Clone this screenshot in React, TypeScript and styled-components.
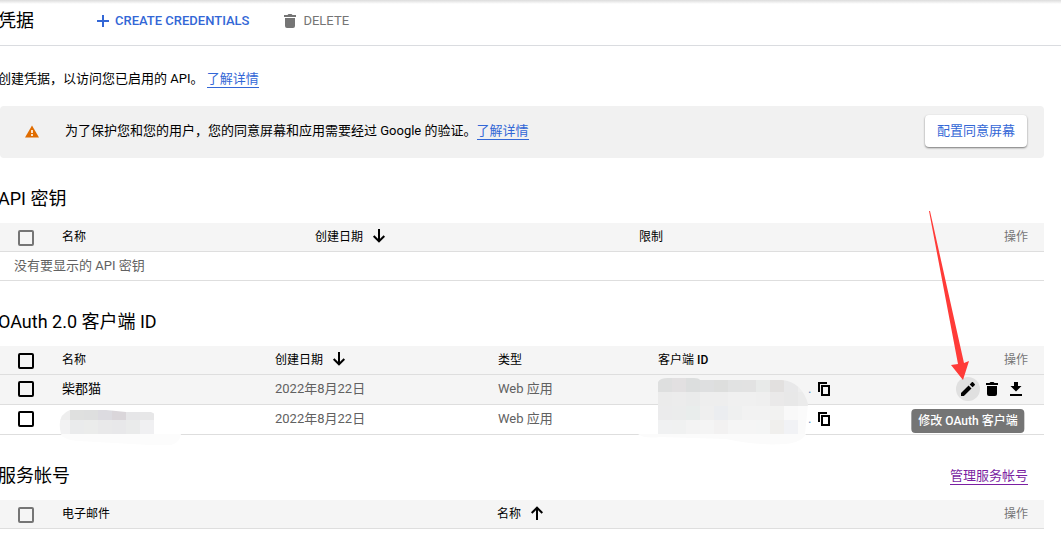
import React from "react";
import styled, { createGlobalStyle, css } from "styled-components";

const GlobalStyle = createGlobalStyle`
  *, *::before, *::after { box-sizing: border-box; }
  body {
    margin: 0;
    background: #fff;
    color: #000;
    font: 13px/20px Roboto, "Noto Sans CJK SC", sans-serif;
    overflow-x: hidden;
  }
  button, input { font: inherit; }
`;

const Page = styled.div`
  position: relative;
  overflow: hidden;
`;

const Header = styled.header`
  display: flex;
  align-items: center;
  height: 46px;
  padding-bottom: 4px;
  border-bottom: 1px solid #dadce0;
  background: linear-gradient(#dcdcdc, #fff 4px);
`;

const PageTitle = styled.h1`
  width: 96px;
  margin: 0 0 0 -2px;
  font-size: 18px;
  line-height: 24px;
  font-weight: 400;
`;

const ToolButton = styled.button<{ $primary?: boolean }>`
  display: flex;
  align-items: center;
  gap: 4px;
  margin-right: 32px;
  padding: 0;
  border: 0;
  background: none;
  font-size: 13px;
  font-weight: ${(p) => (p.$primary ? 500 : 400)};
  color: ${(p) => (p.$primary ? "#3367d6" : "#757575")};
  svg { fill: currentColor; }
`;

const Main = styled.main`
  padding-right: 17px;
`;

const Intro = styled.p`
  margin: 23px 0 17px -2px;
`;

const Link = styled.a<{ $visited?: boolean }>`
  display: inline-block;
  line-height: 16px;
  color: ${(p) => (p.$visited ? "#7b1fa2" : "#3367d6")};
  border-bottom: 1px solid currentColor;
  text-decoration: none;
`;

const Banner = styled.section`
  display: flex;
  align-items: center;
  height: 52px;
  padding: 0 17px 2px 24px;
  border-radius: 4px;
  background: #f1f1f1;
  p { flex: 1; margin: 0 0 0 25px; }
`;

const RaisedButton = styled.button`
  height: 32px;
  padding: 0 12px;
  border: 0;
  border-radius: 4px;
  background: #fff;
  color: #3367d6;
  box-shadow: 0 1px 2px rgba(0, 0, 0, 0.5);
`;

const SectionHead = styled.div`
  display: flex;
  align-items: center;
  justify-content: space-between;
  height: 24px;
  margin: 29px 16px 12px -2px;
`;

const SectionTitle = styled.h2`
  margin: 0;
  font-size: 18px;
  line-height: 24px;
  font-weight: 400;
`;

const Table = styled.table`
  width: 100%;
  table-layout: fixed;
  border-collapse: separate;
  border-spacing: 0;
`;

const cell = css`
  padding: 0;
  text-align: left;
  vertical-align: middle;
  border-bottom: 1px solid #dedede;
  white-space: nowrap;
`;

const Th = styled.th<{ $muted?: boolean }>`
  ${cell}
  height: 29px;
  background: #f5f5f5;
  font-size: 12px;
  font-weight: 400;
  color: ${(p) => (p.$muted ? "#757575" : "#000")};
  ${(p) => p.$muted && "text-align: right; padding-right: 16px;"}
`;

const Medium = styled.span`
  font-weight: 500;
`;

const Td = styled.td<{ $strong?: boolean }>`
  ${cell}
  position: relative;
  height: 30px;
  padding-bottom: 2px;
  color: ${(p) => (p.$strong ? "#000" : "#616161")};
`;

const Row = styled.tr<{ $hover?: boolean }>`
  background: ${(p) => (p.$hover ? "#f5f5f5" : "#fff")};
`;

const EmptyCell = styled.td`
  ${cell}
  height: 29px;
  padding-left: 14px;
  color: #616161;
`;

const SortLabel = styled.span`
  display: flex;
  align-items: center;
  gap: 8px;
`;

const Checkbox = styled.input<{ $muted?: boolean }>`
  display: block;
  appearance: none;
  width: 16px;
  height: 16px;
  margin: 1px 0 0 18px;
  border: 2px solid ${(p) => (p.$muted ? "#757575" : "#000")};
  border-radius: 2px;
`;

const ClientId = styled.div`
  display: flex;
  align-items: center;
  justify-content: flex-start;
  padding-left: 150px;
  color: #5a8fc0;
`;

const CopyButton = styled.button`
  display: flex;
  margin-left: 7px;
  padding: 0;
  border: 0;
  background: none;
`;

const Actions = styled.div`
  display: flex;
  justify-content: flex-end;
  padding-right: 16px;
`;

const IconButton = styled.button<{ $active?: boolean }>`
  position: relative;
  display: grid;
  place-items: center;
  width: 24px;
  height: 24px;
  padding: 0;
  border: 0;
  border-radius: 50%;
  background: ${(p) => (p.$active ? "#e0e0e0" : "none")};
`;

const Tooltip = styled.span`
  position: absolute;
  top: 32px;
  left: 50%;
  transform: translateX(-50%);
  z-index: 2;
  padding: 2px 7px;
  border-radius: 4px;
  background: #757575;
  color: #fff;
  font-size: 12px;
  font-weight: 500;
  white-space: nowrap;
`;

const Redaction = styled.svg`
  position: absolute;
  z-index: 1;
`;

const NameRedaction = styled(Redaction)`
  left: -3px;
  top: 2px;
`;

const IdRedaction = styled(Redaction)`
  left: -20px;
  top: 0;
`;

const Pointer = styled.svg`
  position: absolute;
  z-index: 3;
  top: 211px;
  right: 92px;
  pointer-events: none;
`;

const AddIcon = () => (
  <svg width="17" height="16" viewBox="0 0 17 16"><path d="M8 2h2v5h5v2h-5v5H8V9H3V7h5z" /></svg>
);
const TrashIcon = () => (
  <svg width="18" height="18" viewBox="0 0 18 18">
    <path d="M4 6h10v8q0 2-2 2H6q-2 0-2-2zM3 3h3.500l1-1h3l1 1H15v2H3z" />
  </svg>
);
const PencilIcon = () => (
  <svg width="18" height="18" viewBox="0 0 18 18">
    <path d="M2 13.100V16h2.900l7.600-7.600-2.900-2.900zM15.700 5.200c.4-.4.4-.9 0-1.200l-1.700-1.700c-.4-.4-.9-.4-1.200 0L10.700 4.400l2.900 2.900z" />
  </svg>
);
const DownloadIcon = () => (
  <svg width="18" height="18" viewBox="0 0 18 18">
    <path d="M7 2h4v4h3.500L9 11.500 3.500 6H7zM3 14h12v2H3z" />
  </svg>
);
const SortIcon = ({ up }: { up?: boolean }) => (
  <svg width="16" height="16" viewBox="0 0 16 16" fill="none" stroke="#000" strokeWidth="2">
    {up ? <path d="M8 14V1.500M2.700 7L8 1.700 13.300 7" /> : <path d="M8 0v12.500M2.700 7L8 12.300 13.300 7" />}
  </svg>
);
const CopyIcon = () => (
  <svg width="12" height="14" viewBox="0 0 12 14" fill="none" stroke="#000" strokeWidth="2">
    <path d="M1 10V1h8M4 4h7v9H4z" />
  </svg>
);
const WarningIcon = () => (
  <svg width="16" height="16" viewBox="0 0 16 16">
    <path d="M8 2.500l7 12H1z" fill="#e06c00" />
    <path d="M7 7h2v3H7zM7 11h2v2H7z" fill="#fbe3cb" />
  </svg>
);

const nameTiles = [
  ["#eeeeee", "#dfe0df", "#dedfdf", "#dcdbe0", "#dad6da", "#e6e6e8", "#e7e7e8"],
  ["#f2f2f3", "#eaebec", "#ebeceb", "#e9e9ea", "#e8e8ea", "#eaebeb", "#f0f0f2"],
];

const NameMask = () => (
  <NameRedaction width="124" height="38" aria-hidden="true">
    <clipPath id="nameShape">
      <path d="M11 3h36l20 2h25l4 2v20H2Q-3 8 11 3z" />
    </clipPath>
    <path d="M2 27h120q-1 10-14 12L20 34Q4 33 2 27z" fill="#fcfcfc" />
    <g clipPath="url(#nameShape)">
      {nameTiles.map((row, y) =>
        row.map((fill, x) => (
          <rect key={`${x}-${y}`} x={x * 14 - 3} y={y ? 13 : 0} width="14" height={y ? 15 : 13} fill={fill} />
        )),
      )}
    </g>
  </NameRedaction>
);

const idTiles = [
  ["#dedfdf", "#e2e0e1", "#dcdede", "#dedfe0", "#dddedd", "#e1e2e2", "#e2e2e2", "#e8eae9", "#e2e0df", "#e8e8e9", "#eeeeee"],
  ["#ebebeb", "#ececec", "#eaebeb", "#eeeeee", "#eeeeee", "#f0f0f0", "#f0f0f0", "#efefef", "#eae9e9", "#e8e8e8", "#ebebeb"],
  ["#ebebec", "#ebecec", "#e9edec", "#efefef", "#ebedf0", "#eff0f0", "#f2f2f2", "#f2f2f2", "#f2f2f1", "#f9f9f9", "#fbfbfb"],
  ["#f0f1f2", "#f0f1f1", "#f3f3f3", "#f4f4f4", "#f2f1f1", "#f5f5f5", "#f5f5f5", "#f4f5f5", "#f0efed", "#f1f2f5", "#fafafa"],
];

const IdMask = () => (
  <IdRedaction width="174" height="72" aria-hidden="true">
    <clipPath id="idShape">
      <path d="M20 7Q22 3 30 3h26q5 0 6 2h82q20 2 26 24l-3 30H20z" />
    </clipPath>
    <path d="M0 59h168q-5 9-22 10-25 2-58-5l-66-2Q6 64 0 59z" fill="#fbfbfb" />
    <g clipPath="url(#idShape)">
      {idTiles.map((row, y) =>
        row.map((fill, x) => (
          <rect key={`${x}-${y}`} x={20 + x * 14} y={y ? y * 14 + 3 : 0} width="14" height={y ? 14 : 17} fill={fill} />
        )),
      )}
    </g>
  </IdRedaction>
);

const CopyCell = ({ masked }: { masked?: boolean }) => (
  <Td>
    {masked && <IdMask />}
    <ClientId>
      .
      <CopyButton aria-label="复制客户端 ID"><CopyIcon /></CopyButton>
    </ClientId>
  </Td>
);

const Columns = ({ widths }: { widths: (number | undefined)[] }) => (
  <colgroup>
    {widths.map((w, i) => <col key={i} width={w} />)}
  </colgroup>
);

export default function App() {
  return (
    <Page>
      <GlobalStyle />
      <Header>
        <PageTitle>凭据</PageTitle>
        <ToolButton $primary><AddIcon />CREATE CREDENTIALS</ToolButton>
        <ToolButton><TrashIcon />DELETE</ToolButton>
      </Header>
      <Main>
        <Intro>创建凭据，以访问您已启用的 API。 <Link href="#credentials">了解详情</Link></Intro>
        <Banner>
          <WarningIcon />
          <p>为了保护您和您的用户，您的同意屏幕和应用需要经过 Google 的验证。<Link href="#verification">了解详情</Link></p>
          <RaisedButton>配置同意屏幕</RaisedButton>
        </Banner>

        <SectionHead><SectionTitle>API 密钥</SectionTitle></SectionHead>
        <Table>
          <Columns widths={[62, 253, 324, undefined, 80]} />
          <thead>
            <tr>
              <Th><Checkbox type="checkbox" $muted aria-label="选择所有 API 密钥" /></Th>
              <Th>名称</Th>
              <Th><SortLabel>创建日期<SortIcon /></SortLabel></Th>
              <Th>限制</Th>
              <Th $muted>操作</Th>
            </tr>
          </thead>
          <tbody>
            <tr><EmptyCell colSpan={5}>没有要显示的 API 密钥</EmptyCell></tr>
          </tbody>
        </Table>

        <SectionHead><SectionTitle>OAuth 2.0 客户端 ID</SectionTitle></SectionHead>
        <Table>
          <Columns widths={[62, 213, 223, 160, undefined, 120]} />
          <thead>
            <tr>
              <Th><Checkbox type="checkbox" aria-label="选择所有客户端" /></Th>
              <Th>名称</Th>
              <Th><SortLabel>创建日期<SortIcon /></SortLabel></Th>
              <Th>类型</Th>
              <Th>客户端 <Medium>ID</Medium></Th>
              <Th $muted>操作</Th>
            </tr>
          </thead>
          <tbody>
            <Row $hover>
              <Td><Checkbox type="checkbox" aria-label="选择柴郡猫" /></Td>
              <Td $strong>柴郡猫</Td>
              <Td>2022年8月22日</Td>
              <Td>Web 应用</Td>
              <CopyCell masked />
              <Td>
                <Actions>
                  <IconButton $active aria-describedby="edit-tip">
                    <PencilIcon />
                    <Tooltip id="edit-tip" role="tooltip">修改 OAuth 客户端</Tooltip>
                  </IconButton>
                  <IconButton aria-label="删除"><TrashIcon /></IconButton>
                  <IconButton aria-label="下载"><DownloadIcon /></IconButton>
                </Actions>
              </Td>
            </Row>
            <Row>
              <Td><Checkbox type="checkbox" aria-label="选择客户端" /></Td>
              <Td $strong><NameMask /></Td>
              <Td>2022年8月22日</Td>
              <Td>Web 应用</Td>
              <CopyCell />
              <Td />
            </Row>
          </tbody>
        </Table>

        <SectionHead>
          <SectionTitle>服务帐号</SectionTitle>
          <Link href="#service-accounts" $visited>管理服务帐号</Link>
        </SectionHead>
        <Table>
          <Columns widths={[62, 435, undefined, 80]} />
          <thead>
            <tr>
              <Th><Checkbox type="checkbox" $muted aria-label="选择所有服务帐号" /></Th>
              <Th>电子邮件</Th>
              <Th><SortLabel>名称<SortIcon up /></SortLabel></Th>
              <Th $muted>操作</Th>
            </tr>
          </thead>
        </Table>
      </Main>
      <Pointer width="40" height="170" viewBox="0 0 40 170" aria-hidden="true">
        <path d="M0 0h1L35 152l5-2-6 19-12-15 7-1z" fill="#ff3b38" />
      </Pointer>
    </Page>
  );
}
